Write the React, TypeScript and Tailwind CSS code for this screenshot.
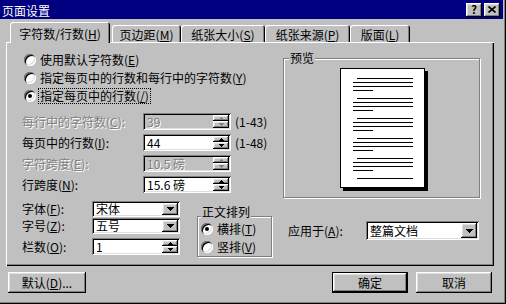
import React from 'react';

const raised =
  'shadow-[inset_-1px_-1px_0_#000,inset_1px_1px_0_#fff,inset_-2px_-2px_0_#808080,inset_2px_2px_0_#dfdfdf]';
const sunken =
  'shadow-[inset_1px_1px_0_#808080,inset_-1px_-1px_0_#fff,inset_2px_2px_0_#000,inset_-2px_-2px_0_#dfdfdf]';
const dim = 'text-[#808080] [text-shadow:1px_1px_0_#fff]';

function Key({ text, k, tail = '' }: { text: string; k: string; tail?: string }) {
  return (
    <>
      {text}(<span className="underline">{k}</span>){tail}
    </>
  );
}

function Tri({ up, color = '#000', w = 5 }: { up?: boolean; color?: string; w?: number }) {
  const h = Math.ceil(w / 2);
  return (
    <svg width={w} height={h} viewBox={`0 0 ${w} ${h}`} shapeRendering="crispEdges">
      <path d={up ? `M0 ${h}L${w / 2} 0L${w} ${h}Z` : `M0 0L${w} 0L${w / 2} ${h}Z`} fill={color} />
    </svg>
  );
}

function Radio({ on }: { on?: boolean }) {
  return (
    <span className={`w-[12px] h-[12px] rounded-full bg-white shrink-0 flex items-center justify-center ${sunken}`}>
      {on && <span className="w-[4px] h-[4px] rounded-full bg-black" />}
    </span>
  );
}

function Spin({ value, off }: { value: string; off?: boolean }) {
  const c = off ? '#808080' : '#000';
  return (
    <div className={`w-[88px] h-[17px] p-[2px] flex ${sunken} ${off ? 'bg-[#c0c0c0]' : 'bg-white'}`}>
      <span className={`flex-1 pl-[2px] leading-[13px] ${off ? dim : ''}`}>{value}</span>
      <div className="w-[16px] flex flex-col">
        <span className={`h-[6px] bg-[#c0c0c0] flex items-center justify-center ${raised}`}>
          <Tri up color={c} />
        </span>
        <span className={`h-[7px] bg-[#c0c0c0] flex items-center justify-center ${raised}`}>
          <Tri color={c} />
        </span>
      </div>
    </div>
  );
}

function Combo({ value, w, h }: { value: string; w: string; h: string }) {
  return (
    <div className={`${w} ${h} p-[2px] flex bg-white ${sunken}`}>
      <span className="flex-1 pl-[2px] flex items-center leading-none">{value}</span>
      <span className={`w-[16px] bg-[#c0c0c0] flex items-center justify-center ${raised}`}>
        <Tri w={7} />
      </span>
    </div>
  );
}

function Btn({ children, w, def }: { children: React.ReactNode; w: string; def?: boolean }) {
  if (def)
    return (
      <div className={`${w} h-[21px] border border-black`}>
        <div className={`w-full h-full flex items-center justify-center ${raised}`}>{children}</div>
      </div>
    );
  return <div className={`${w} h-[21px] flex items-center justify-center ${raised}`}>{children}</div>;
}

function Tab({ label, k, w, active }: { label: string; k: string; w: string; active?: boolean }) {
  return (
    <div
      className={`${w} bg-[#c0c0c0] rounded-t-[3px] flex justify-center shadow-[inset_1px_1px_0_#fff,inset_-1px_0_0_#000,inset_-2px_0_0_#808080] ${
        active ? 'relative z-10 h-[21px] -mb-px pt-[6px]' : 'h-[17px] pt-[4px]'
      }`}
    >
      <span className="leading-[12px]">
        <Key text={label} k={k} />
      </span>
    </div>
  );
}

function PagePreview() {
  const lines: { x: number; y: number; w: number }[] = [];
  for (let p = 0; p < 6; p++) {
    const y0 = 10 + p * 20;
    const rows = [
      { x: 17, w: 56 },
      { x: 13, w: 60 },
      { x: 13, w: 60 },
      { x: 13, w: 20 },
    ];
    rows.forEach((r, i) => {
      const y = y0 + i * 4;
      if (y < 113) lines.push({ x: r.x, y, w: r.w });
    });
  }
  return (
    <svg width="88" height="123" viewBox="0 0 88 123" shapeRendering="crispEdges">
      <rect x="85" y="3" width="3" height="120" fill="#000" />
      <rect x="3" y="120" width="85" height="3" fill="#000" />
      <rect x="0.5" y="0.5" width="84" height="119" fill="#fff" stroke="#000" />
      {lines.map((l, i) => (
        <rect key={i} x={l.x} y={l.y} width={l.w} height="1" fill="#000" />
      ))}
    </svg>
  );
}

export default function App() {
  return (
    <div className="w-[506px] h-[304px] bg-[#c0c0c0] flex flex-col text-[12px] text-black font-['Noto_Sans_CJK_SC','Noto_Sans',sans-serif] shadow-[inset_-1px_-1px_0_#000,inset_-2px_-2px_0_#808080]">
      {/* Title bar */}
      <div className="w-[503px] h-[19px] bg-[#000080] flex items-center pl-[2px] pr-[3px]">
        <span className="text-white leading-[12px] pt-[2px]">页面设置</span>
        <div className="ml-auto flex gap-[2px]">
          <div className={`w-[16px] h-[14px] bg-[#c0c0c0] flex items-center justify-center font-bold text-[11px] leading-none ${raised}`}>
            ?
          </div>
          <div className={`w-[16px] h-[14px] bg-[#c0c0c0] flex items-center justify-center ${raised}`}>
            <svg width="8" height="7" viewBox="0 0 8 7">
              <path d="M0.5 0.5L7.5 6.5M7.5 0.5L0.5 6.5" stroke="#000" strokeWidth="1.6" />
            </svg>
          </div>
        </div>
      </div>

      {/* Tabs */}
      <div className="mt-[3px] h-[20px] flex items-end pl-[10px]">
        <Tab label="字符数/行数" k="H" w="w-[100px]" active />
        <div className="w-[2px]" />
        <Tab label="页边距" k="M" w="w-[69px]" />
        <Tab label="纸张大小" k="S" w="w-[84px]" />
        <Tab label="纸张来源" k="P" w="w-[85px]" />
        <Tab label="版面" k="L" w="w-[60px]" />
      </div>

      {/* Panel */}
      <div className="ml-[6px] w-[488px] h-[224px] flex shadow-[inset_1px_1px_0_#fff,inset_-1px_-1px_0_#000,inset_-2px_-2px_0_#808080]">
        {/* Left column */}
        <div className="w-[277px] flex flex-col pt-[9px]">
          <div className="pl-[18px] flex flex-col">
            <div className="h-[18px] flex items-center gap-[4px]">
              <Radio />
              <span className="leading-[12px]">
                <Key text="使用默认字符数" k="E" />
              </span>
            </div>
            <div className="h-[18px] flex items-center gap-[4px]">
              <Radio />
              <span className="leading-[12px]">
                <Key text="指定每页中的行数和每行中的字符数" k="Y" />
              </span>
            </div>
            <div className="h-[18px] flex items-center gap-[2px]">
              <Radio on />
              <span className="h-[16px] px-[1px] flex items-center border border-dotted border-black leading-[12px]">
                <Key text="指定每页中的行数" k="/" />
              </span>
            </div>
          </div>

          <div className="mt-[8px] pl-[16px] flex flex-col gap-[4px]">
            <div className="h-[17px] flex items-center">
              <span className={`w-[121px] leading-[12px] ${dim}`}>
                <Key text="每行中的字符数" k="C" tail=":" />
              </span>
              <Spin value="39" off />
              <span className="ml-[4px] leading-[12px]">(1-43)</span>
            </div>
            <div className="h-[17px] flex items-center">
              <span className="w-[121px] leading-[12px]">
                <Key text="每页中的行数" k="I" tail=":" />
              </span>
              <Spin value="44" />
              <span className="ml-[4px] leading-[12px]">(1-48)</span>
            </div>
            <div className="h-[17px] flex items-center">
              <span className={`w-[121px] leading-[12px] ${dim}`}>
                <Key text="字符跨度" k="E" tail=":" />
              </span>
              <Spin value="10.5 磅" off />
            </div>
            <div className="h-[17px] flex items-center">
              <span className="w-[121px] leading-[12px]">
                <Key text="行跨度" k="N" tail=":" />
              </span>
              <Spin value="15.6 磅" />
            </div>
          </div>

          <div className="mt-[8px] pl-[16px] flex">
            <div className="w-[158px] flex flex-col">
              <div className="h-[16px] flex items-center">
                <span className="w-[70px] leading-[12px]">
                  <Key text="字体" k="F" tail=":" />
                </span>
                <Combo value="宋体" w="w-[88px]" h="h-[16px]" />
              </div>
              <div className="mt-[1px] h-[16px] flex items-center">
                <span className="w-[70px] leading-[12px]">
                  <Key text="字号" k="Z" tail=":" />
                </span>
                <Combo value="五号" w="w-[88px]" h="h-[16px]" />
              </div>
              <div className="mt-[4px] h-[17px] flex items-center">
                <span className="w-[70px] leading-[12px]">
                  <Key text="栏数" k="O" tail=":" />
                </span>
                <Spin value="1" />
              </div>
            </div>

            <div className="ml-[17px] mt-[5px] w-[75px] flex flex-col">
              <span className="self-start ml-[4px] px-[1px] bg-[#c0c0c0] relative z-10 h-[12px] leading-[12px]">
                正文排列
              </span>
              <div className="-mt-[2px] h-[41px] border border-[#808080] shadow-[inset_1px_1px_0_#fff,1px_1px_0_#fff] pt-[3px] pl-[3px] flex flex-col">
                <div className="h-[18px] flex items-center gap-[4px]">
                  <Radio on />
                  <span className="leading-[12px]">
                    <Key text="横排" k="T" />
                  </span>
                </div>
                <div className="h-[18px] flex items-center gap-[4px]">
                  <Radio />
                  <span className="leading-[12px]">
                    <Key text="竖排" k="V" />
                  </span>
                </div>
              </div>
            </div>
          </div>
        </div>

        {/* Right column */}
        <div className="w-[197px] flex flex-col pt-[10px]">
          <span className="self-start ml-[6px] px-[1px] bg-[#c0c0c0] relative z-10 h-[12px] leading-[12px]">预览</span>
          <div className="-mt-[6px] h-[140px] border border-[#808080] shadow-[inset_1px_1px_0_#fff,1px_1px_0_#fff] pt-[9px] pl-[56px]">
            <PagePreview />
          </div>
          <div className="mt-[23px] h-[19px] flex items-center pl-[5px]">
            <span className="w-[78px] leading-[12px]">
              <Key text="应用于" k="A" tail=":" />
            </span>
            <Combo value="整篇文档" w="w-[113px]" h="h-[19px]" />
          </div>
        </div>
      </div>

      {/* Buttons */}
      <div className="mt-[6px] flex pr-[14px]">
        <div className="ml-[8px]">
          <Btn w="w-[78px]">
            <span className="leading-[12px]">
              <Key text="默认" k="D" tail="..." />
            </span>
          </Btn>
        </div>
        <div className="ml-auto">
          <Btn w="w-[76px]" def>
            <span className="leading-[12px]">确定</span>
          </Btn>
        </div>
        <div className="ml-[8px]">
          <Btn w="w-[76px]">
            <span className="leading-[12px]">取消</span>
          </Btn>
        </div>
      </div>
    </div>
  );
}
